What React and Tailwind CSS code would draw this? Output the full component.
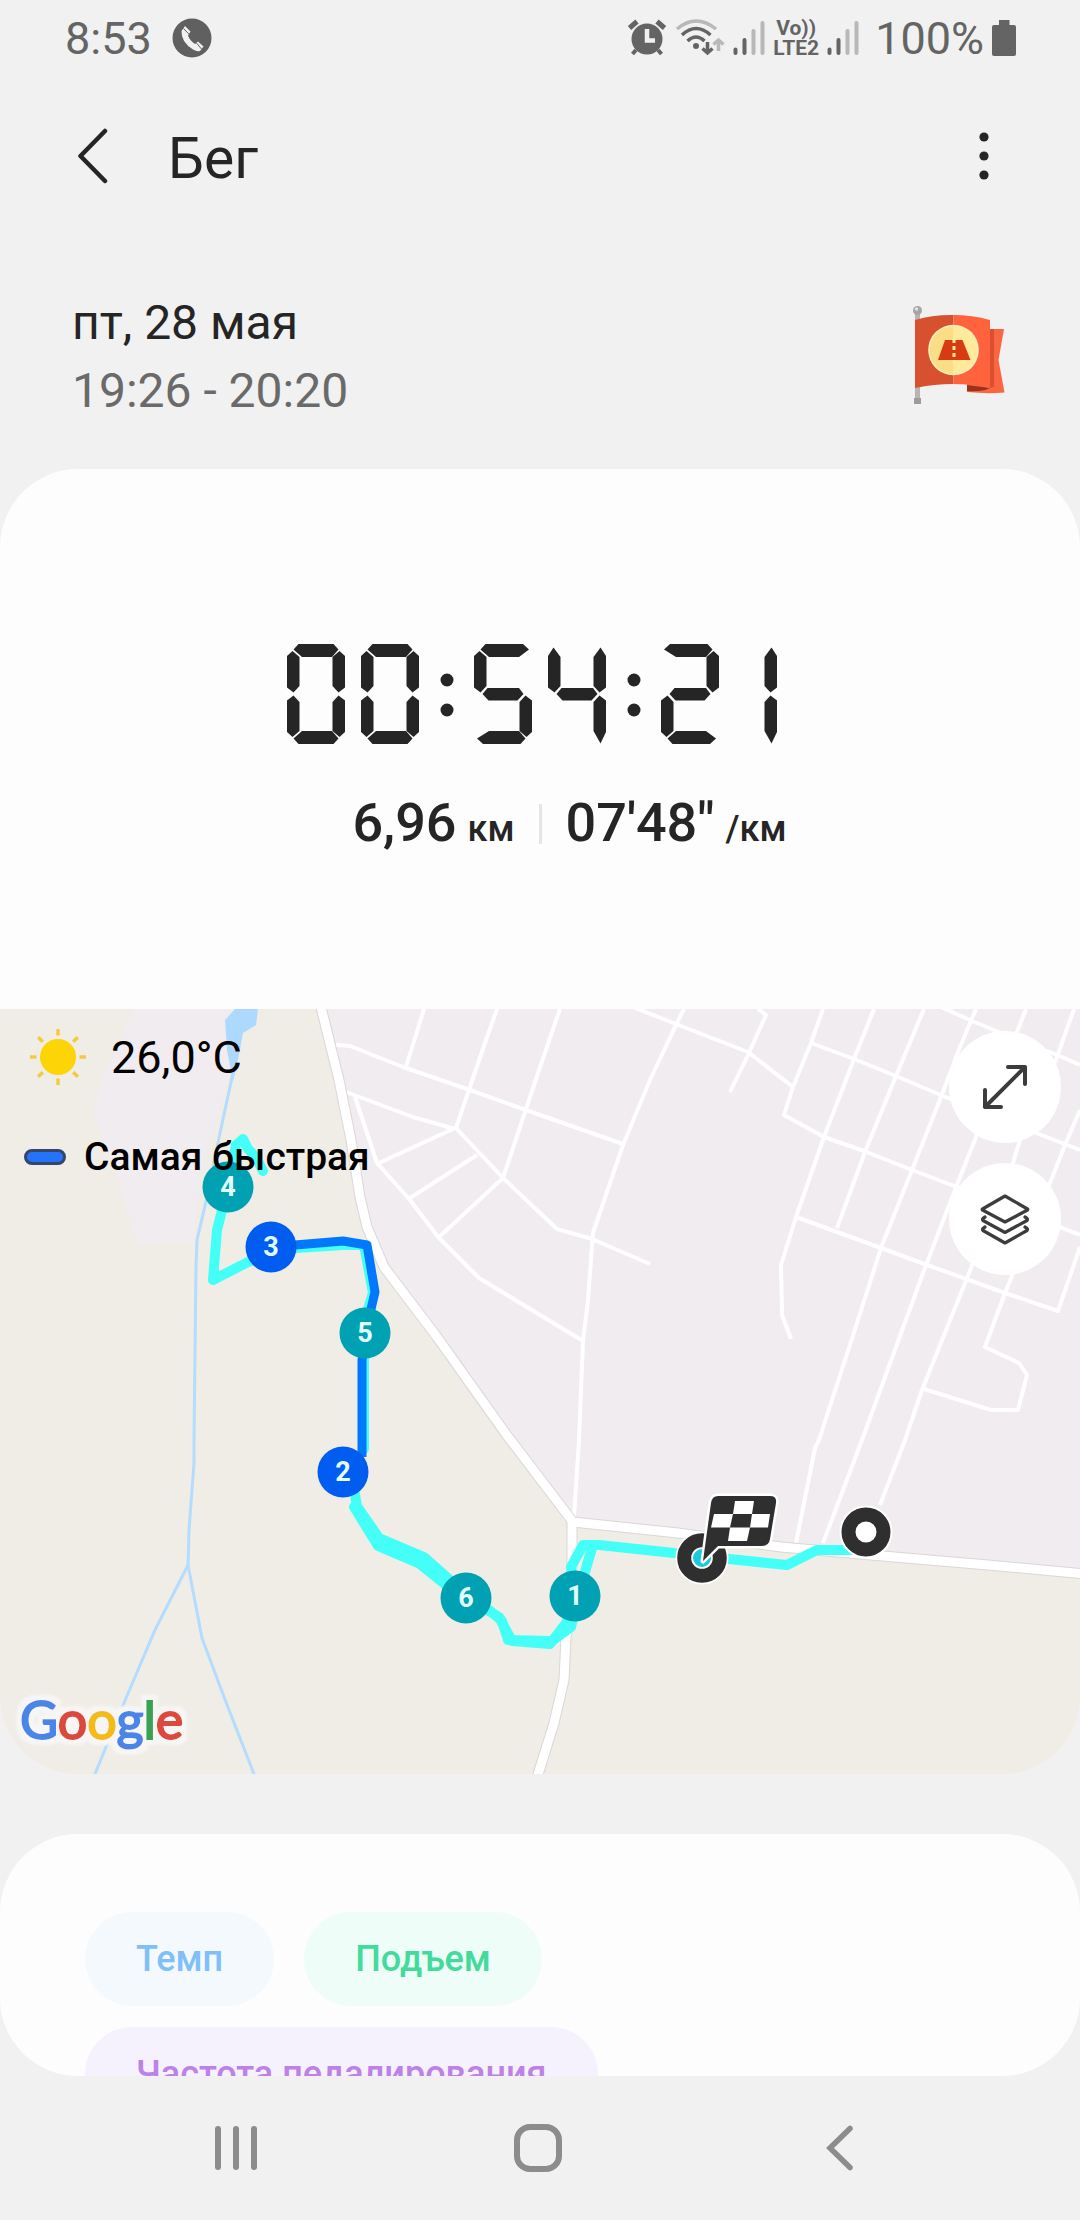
import React from "react";

const GRAY = "#646464";

/* ---------- status bar icons ---------- */

function CallIcon() {
  return (
    <svg className="size-10" viewBox="0 0 40 40" aria-hidden="true">
      <circle cx="20" cy="20" r="19.5" fill="#606060" />
      <path
        d="M9.500 13 L13 8 L18.500 13.500 L16 17.500 Q18 23 23 26 L26 23.500 L31.500 28.500 L28 33 Q25 34 21 31.500 Q9 24 9.500 13 Z"
        fill="#f1f1f1"
      />
      <path d="M11.500 10.500 L16.800 16 M24.500 25 L29.500 31" stroke="#606060" strokeWidth="1" />
    </svg>
  );
}

function AlarmIcon() {
  return (
    <svg className="h-10 w-10" viewBox="0 0 40 40" fill="none" stroke={GRAY} aria-hidden="true">
      <circle cx="20" cy="21" r="15.500" fill={GRAY} stroke="none" />
      <path d="M2.500 10 L10 3.500 M30 3.500 L37.500 10" strokeWidth="5" />
      <path d="M9 32 L5.500 36 M31 32 L34.500 36" strokeWidth="4" />
      <path d="M20 11 V22.500 H28" stroke="#f1f1f1" strokeWidth="4.500" />
    </svg>
  );
}

function WifiIcon() {
  return (
    <svg className="h-10 w-[50px]" viewBox="0 0 50 40" fill="none" aria-hidden="true">
      <path d="M2 11 Q21 -5 41 11" stroke="#b8b8b8" strokeWidth="3.500" />
      <path d="M7 17 Q21 4 35.500 17" stroke={GRAY} strokeWidth="3.500" />
      <path d="M12.500 23 Q21 15 29.500 23" stroke={GRAY} strokeWidth="3.500" />
      <circle cx="21" cy="28" r="3" fill={GRAY} />
      <path d="M32.500 24 V34 M27.500 30.500 L32.500 35 L37.500 30.500" stroke={GRAY} strokeWidth="3.500" />
      <path d="M43.500 33 V23 M38.500 26.500 L43.500 22 L48.500 26.500" stroke="#b8b8b8" strokeWidth="3.500" />
    </svg>
  );
}

function SignalIcon() {
  return (
    <svg className="h-10 w-8" viewBox="0 0 32 40" strokeLinecap="round" strokeWidth="4" aria-hidden="true">
      <path d="M2.500 31.500 V35 M11.500 22 V35" stroke={GRAY} />
      <path d="M20.500 13 V35 M29.500 5 V35" stroke="#b8b8b8" />
    </svg>
  );
}

function StatusBar() {
  return (
    <div className="flex h-[76px] shrink-0 items-center justify-between pl-[65px] pr-16 text-[45px] leading-none text-[#646464]">
      <div className="flex items-center gap-5">
        <span>8:53</span>
        <CallIcon />
      </div>
      <div className="flex items-center gap-2">
        <AlarmIcon />
        <WifiIcon />
        <SignalIcon />
        <div className="flex flex-col items-center text-[21px] font-bold leading-[20px]">
          <span>Vo))</span>
          <span>LTE2</span>
        </div>
        <SignalIcon />
        <span className="pl-2">100%</span>
        <svg className="h-9 w-6" viewBox="0 0 24 36" fill={GRAY} aria-hidden="true">
          <path d="M7 0 H17.500 V5 H22 Q24 5 24 7 V34 Q24 36 22 36 H2 Q0 36 0 34 V7 Q0 5 2 5 H7 Z" />
        </svg>
      </div>
    </div>
  );
}

function TitleBar() {
  return (
    <header className="flex h-40 shrink-0 items-center pl-[76px] pr-[74px]">
      <button type="button" aria-label="Назад" className="mr-[60px]">
        <svg className="h-14 w-8" viewBox="0 0 32 56" fill="none" stroke="#252525" strokeWidth="4.500" strokeLinecap="round" strokeLinejoin="round">
          <path d="M29 3 L4.500 28 L29 53" />
        </svg>
      </button>
      <h1 className="flex-1 pt-1 text-[57px] leading-none text-[#252525]">Бег</h1>
      <button type="button" aria-label="Ещё">
        <svg className="h-14 w-11" viewBox="0 0 44 56" fill="#252525">
          <circle cx="22" cy="9" r="4.600" />
          <circle cx="22" cy="28" r="4.600" />
          <circle cx="22" cy="47" r="4.600" />
        </svg>
      </button>
    </header>
  );
}

/* ---------- goal flag ---------- */

function FlagIcon() {
  return (
    <svg className="h-[100px] w-[94px]" viewBox="0 0 94 100" aria-label="Цель достигнута" role="img">
      <rect x="3" y="8" width="5" height="86" fill="#b5b5b5" />
      <rect x="2" y="93" width="7" height="6" fill="#9c9c9c" />
      <circle cx="5.500" cy="5.500" r="4.500" fill="#a5a5a5" />
      <circle cx="4.500" cy="4" r="1.800" fill="#e2e2e2" />
      <path d="M70 24 L92 24 L86.500 55 L92.500 87.500 Q75 89 55 87 L55 78 L78 80 Z" fill="#fb6640" />
      <path d="M78 24 H82 V82 L78 83 Z" fill="#d9502d" />
      <path d="M55 80 L78 83 Q70 87 55 86 Z" fill="#99331b" />
      <path d="M3 15 Q22 9.500 41.500 10 V79 Q22 79 3 83 Z" fill="#d8512e" />
      <path d="M41.500 10 Q60 10 78 15 V83 Q60 79 41.500 79 Z" fill="#ff633d" />
      <circle cx="41.500" cy="45" r="25.300" fill="#fdf0bd" />
      <path d="M41.500 21.200 A23.800 23.800 0 0 0 41.500 68.800 Z" fill="#f9de86" />
      <path d="M41.500 21.200 A23.800 23.800 0 0 1 41.500 68.800 Z" fill="#ffea9c" />
      <path d="M33 35 H50.500 L58.500 55 H26 Z" fill="#d83a12" />
      <path d="M42 34 V57" stroke="#ffea9c" strokeWidth="3" strokeDasharray="4 3" />
    </svg>
  );
}

/* ---------- seven-segment timer ---------- */

const SEGMENTS = {
  0: "abcdef",
  1: "bc",
  2: "abged",
  3: "abgcd",
  4: "fgbc",
  5: "afgcd",
  6: "afgedc",
  7: "abc",
  8: "abcdefg",
  9: "abcdfg",
};

function segmentPoints(name, on) {
  const has = (s) => on.includes(s);
  const topLeft = has("f") ? "6.5,5.5 11.5,0" : "3,5.5 9,0";
  const topRight = has("b") ? "46.5,0 51.5,5.5" : "49,0 55,5.5";
  const botLeft = has("e") ? "11.5,100 6.5,94.5" : "9,100 3,94.5";
  const botRight = has("c") ? "51.5,94.5 46.5,100" : "55,94.5 49,100";
  const peak = has("a") ? 7 : 3.5;
  const foot = has("d") ? 93 : 99.5;
  switch (name) {
    case "a":
      return `${topLeft} ${topRight} 45,13 15,13`;
    case "b":
      return `52.500,${peak} 58,12 58,43.500 51.500,48.500 45.500,42 45.500,13`;
    case "c":
      return `51.500,51.500 58,56.500 58,88 52.500,${foot} 45.500,87 45.500,58`;
    case "d":
      return `${botRight} ${botLeft} 15,87 45,87`;
    case "e":
      return `6.500,51.500 12.500,58 12.500,87 5.500,${foot} 0,88 0,56.500`;
    case "f":
      return `5.500,${peak} 12.500,13 12.500,42 6.500,48.500 0,43.500 0,12`;
    default:
      return "8.5,50 13.5,44 45,44 49.5,50 43.5,56.5 14.5,56.5";
  }
}

function Timer({ value }) {
  return (
    <div role="timer" aria-label={value} className="flex items-center justify-center gap-4">
      {value.split("").map((ch, i) =>
        ch === ":" ? (
          <svg key={i} className="-mx-4 h-[100px] w-[55px]" viewBox="0 0 55 100" fill="#252525">
            <circle cx="28" cy="36" r="6.500" />
            <circle cx="28" cy="66" r="6.500" />
          </svg>
        ) : (
          <svg key={i} className="h-[100px] w-[58px]" viewBox={ch === "1" ? "16 0 58 100" : "0 0 58 100"} fill="#252525">
            {SEGMENTS[ch].split("").map((s) => (
              <polygon key={s} points={segmentPoints(s, SEGMENTS[ch])} />
            ))}
          </svg>
        )
      )}
    </div>
  );
}

function Summary() {
  return (
    <section className="flex flex-col rounded-t-[78px] bg-[#fdfdfd] pb-[150px] pt-[175px] text-[#252525]">
      <Timer value="00:54:21" />
      <div className="mt-[49px] flex items-center text-[54px] font-medium leading-[60px]">
        <p className="flex flex-1 items-baseline justify-end gap-[11px] pr-6">
          6,96 <span className="text-[36px]">км</span>
        </p>
        <span className="mb-1 h-10 w-[3px] bg-[#e5e5e5]" />
        <p className="flex flex-1 items-baseline gap-[11px] pl-6">
          07'48" <span className="text-[36px]">/км</span>
        </p>
      </div>
    </section>
  );
}

/* ---------- map ---------- */

const STREETS = [
  "336,36 350,37 403,58 467,80 540,106 623,135",
  "424,0 406,58",
  "497,0 486,31 456,119 503,169 540,204 557,220 592,230 650,255",
  "346,83 413,108 455,120",
  "355,88 377,154 410,191 439,229 479,269 540,306 583,332",
  "379,154 455,119",
  "410,189 477,146",
  "439,228 503,169 525,103 540,58 560,0",
  "633,-2 676,15 748,43 793,78",
  "684,0 676,16 650,71 623,136 593,224 588,291 583,332 579,431 574,508",
  "758,0 766,6 748,46 730,83",
  "823,0 811,34 793,78 784,106 824,128 864,142 912,161 957,178 1080,226",
  "811,34 854,50 896,67 943,87 1036,124 1080,141",
  "874,0 854,50 824,128 796,208 781,256 782,306 791,330",
  "924,0 896,67 865,143 837,219",
  "976,0 960,38 941,88 912,161 881,239 857,314 819,431 815,439 796,534",
  "1026,0 976,128 955,181 926,256 862,431 823,534",
  "1074,0 1057,48 1020,131 1013,154 967,269 922,381 905,431 880,496",
  "1080,101 1065,136 1050,174 1005,284 985,338 1019,354 1027,366 1018,401 991,401 924,380",
  "796,208 881,239 927,256 1005,284 1058,302 1080,238",
  "941,-2 972,12 1001,24 1057,46 1080,56",
];

const ROADS = [
  "320,-6 339,71 351,131 360,188 367,218 384,258 437,328 506,425 573,513",
  "573,513 678,524 781,538 871,546 988,556 1086,565",
  "572,513 572,554 571,608 566,628 564,671 554,714 536,772",
];

const MARKERS = [
  { n: 4, x: 228, y: 178, fill: "#00a1b2" },
  { n: 3, x: 271, y: 238, fill: "#005df0" },
  { n: 5, x: 365, y: 324, fill: "#00a1b2" },
  { n: 2, x: 343, y: 463, fill: "#005df0" },
  { n: 6, x: 466, y: 589, fill: "#00a1b2" },
  { n: 1, x: 575, y: 587, fill: "#00a1b2" },
];

function MapDrawing() {
  return (
    <svg className="block h-auto w-full" viewBox="0 0 1080 765" fill="none" role="img" aria-label="Маршрут на карте">
      <rect width="1080" height="765" fill="#efede6" />
      <polygon fill="#f0ecf0" points="133,0 103,68 93,101 119,174 136,236 193,233 203,151 220,101 232,58 226,21 241,0" />
      <polygon fill="#f0ecf0" points="320,0 339,71 351,131 360,188 367,218 384,258 437,328 506,425 573,513 678,524 781,538 871,546 988,556 1080,564 1080,0" />
      <polygon fill="#add9ff" points="235,0 225,11 227,41 233,72 238,51 243,24 256,16 258,0" />
      <g stroke="#b3dcff" strokeWidth="3">
        <polyline points="233,64 220,124 208,184 197,231 196,258 194,431 194,454 189,521 188,556 155,621 121,701 95,765" />
        <polyline points="188,556 202,629 224,688 254,765" />
      </g>
      <g stroke="#ffffff" strokeWidth="4" strokeLinejoin="round">
        {STREETS.map((p) => (
          <polyline key={p} points={p} />
        ))}
      </g>
      <g stroke="#d9d7d8" strokeWidth="11" strokeLinejoin="round">
        {ROADS.map((p) => (
          <polyline key={p} points={p} />
        ))}
      </g>
      <g stroke="#ffffff" strokeWidth="9" strokeLinejoin="round">
        {ROADS.map((p) => (
          <polyline key={p} points={p} />
        ))}
      </g>

      <g stroke="#44fff8" strokeWidth="10" strokeLinejoin="round" strokeLinecap="round">
        <polyline points="860,541 817,541 787,556 729,550 674,544 599,536 583,536 571,558 575,587 566,614 550,635 512,632 499,608 467,589" />
        <polyline points="593,536 584,566 571,618 552,632 508,631 502,612 489,601" />
        <polyline points="460,580 424,548 379,529 357,497 353,475" />
        <polyline points="456,584 420,555 378,537 354,498" />
        <polyline points="364,440 364,351 368,300 373,284 364,236 343,236 296,239 248,253 213,271 217,221 228,178 236,136 243,130 248,140 256,148 263,162" />
      </g>
      <polyline stroke="#0078fc" strokeWidth="9" strokeLinejoin="round" points="362,448 362,351 371,300 375,283 367,236 343,232 271,238" />

      {MARKERS.map((m) => (
        <g key={m.n}>
          <circle cx={m.x} cy={m.y} r="25.500" fill={m.fill} />
          <text x={m.x} y={m.y + 9} textAnchor="middle" fill="#e2ffff" className="text-[27px] font-bold">
            {m.n}
          </text>
        </g>
      ))}

      <circle cx="702" cy="549" r="17.500" stroke="#ffffff" strokeWidth="18" />
      <circle cx="702" cy="549" r="10" fill="#19c9df" stroke="#ffffff" strokeWidth="2" />
      <circle cx="702" cy="549" r="17.800" stroke="#2f2f2f" strokeWidth="14" />
      <path
        d="M718 487 H770 Q777 487 776 494 L770 530 Q769 537 762 537 H718 L703 552 L711 494 Q712 487 718 487 Z"
        stroke="#ffffff"
        strokeWidth="5"
        strokeLinejoin="round"
      />
      <path
        d="M718 487 H770 Q777 487 776 494 L770 530 Q769 537 762 537 H718 L703 552 L711 494 Q712 487 718 487 Z"
        fill="#2f2f2f"
      />
      <path
        d="M735 492 H754 L752 505 H733 Z M714 505 H733 L730 518.500 H711 Z M752 505 H770 L768 518.500 H750 Z M730 518.500 H750 L747 532 H728 Z"
        fill="#ffffff"
      />

      <circle cx="866" cy="523" r="26.500" fill="#ffffff" />
      <circle cx="866" cy="523" r="17.500" stroke="#2f2f2f" strokeWidth="14" />
    </svg>
  );
}

function GoogleMark() {
  return (
    <svg className="h-[80px] w-[184px]" viewBox="0 0 184 80" role="img" aria-label="Google">
      <defs>
        <filter id="halo" x="-10%" y="-30%" width="120%" height="160%">
          <feMorphology in="SourceAlpha" operator="dilate" radius="5" result="spread" />
          <feGaussianBlur in="spread" stdDeviation="1" result="soft" />
          <feFlood floodColor="#f7f6f5" />
          <feComposite in2="soft" operator="in" result="glow" />
          <feMerge>
            <feMergeNode in="glow" />
            <feMergeNode in="SourceGraphic" />
          </feMerge>
        </filter>
      </defs>
      <text x="10" y="60" className="font-[Lato] text-[52px]" strokeWidth="2" filter="url(#halo)">
        <tspan fill="#4a86e8" stroke="#4a86e8">G</tspan>
        <tspan fill="#dc483c" stroke="#dc483c">o</tspan>
        <tspan fill="#f4bb16" stroke="#f4bb16">o</tspan>
        <tspan fill="#4a86e8" stroke="#4a86e8">g</tspan>
        <tspan fill="#38a352" stroke="#38a352">l</tspan>
        <tspan fill="#dc483c" stroke="#dc483c">e</tspan>
      </text>
    </svg>
  );
}

function SunIcon() {
  return (
    <svg className="size-[58px]" viewBox="-29 -29 58 58" aria-hidden="true">
      <circle r="18" fill="#fdd406" />
      <g stroke="#f3cb3c" strokeWidth="3.500">
        {[0, 45, 90, 135, 180, 225, 270, 315].map((a) => (
          <path key={a} d="M0 -21.500 V-28" transform={`rotate(${a})`} />
        ))}
      </g>
    </svg>
  );
}

const roundButton = "flex size-28 items-center justify-center rounded-full bg-white";

function RouteMap() {
  return (
    <section className="relative overflow-hidden rounded-b-[78px]">
      <MapDrawing />
      <div className="absolute left-[24px] top-[19px] flex flex-col text-black">
        <div className="flex h-[58px] items-center gap-6 pl-[5px] text-[45px] leading-none">
          <SunIcon />
          <span>26,0°C</span>
        </div>
        <div className="mt-[46px] flex items-center gap-[18px] text-[39px] font-medium leading-[50px]">
          <span className="h-4 w-[42px] rounded-full border-[3px] border-[#34466b] bg-[#2474fb]" />
          <span>Самая быстрая</span>
        </div>
      </div>
      <div className="absolute right-[19px] top-[22px] flex flex-col gap-5">
        <button type="button" aria-label="Развернуть карту" className={roundButton}>
          <svg className="size-12" viewBox="0 0 48 48" fill="none" stroke="#3c3c3c" strokeWidth="4" strokeLinecap="round" strokeLinejoin="round">
            <path d="M27 4 H44 V21 M44 4 L4 44 M4 27 V44 H20" />
          </svg>
        </button>
        <button type="button" aria-label="Слои карты" className={roundButton}>
          <svg className="size-[52px]" viewBox="0 0 52 52" fill="none" stroke="#3c3c3c" strokeWidth="3.200" strokeLinecap="round" strokeLinejoin="round">
            <path d="M26 3 L48.500 16 Q49 16.500 48.500 17 L26 29 L3.500 17 Q3 16.500 3.500 16 Z" />
            <path d="M6 24 Q2.500 26 4 27.500 L26 39.500 L48 27.500 Q49.500 26 46 24" />
            <path d="M6 34 Q2.500 36 4 37.500 L26 50 L48 37.500 Q49.500 36 46 34" />
          </svg>
        </button>
      </div>
      <div className="absolute bottom-[15px] left-[10px]">
        <GoogleMark />
      </div>
    </section>
  );
}

/* ---------- chart chips ---------- */

const chip = "rounded-full px-[51px] text-[36px] font-medium leading-[94px]";

function ChartCard() {
  return (
    <section className="mt-[60px] flex flex-wrap gap-x-[30px] gap-y-[21px] rounded-[78px] bg-[#fdfdfd] px-[85px] pb-20 pt-[78px]">
      <button type="button" className={`${chip} bg-[#f4f9fd] text-[#7fc0f8]`}>Темп</button>
      <button type="button" className={`${chip} bg-[#effdf8] text-[#42db9c]`}>Подъем</button>
      <button type="button" className={`${chip} bg-[#f5f1fd] text-[#bd82e6]`}>Частота педалирования</button>
    </section>
  );
}

function NavBar() {
  return (
    <nav className="flex h-36 shrink-0 items-center justify-center gap-[250px] pr-1">
      <button type="button" aria-label="Недавние">
        <svg className="size-[52px]" viewBox="0 0 52 52" stroke="#8c8c8c" strokeWidth="6" strokeLinecap="round">
          <path d="M8 7 V45 M26 7 V45 M44 7 V45" />
        </svg>
      </button>
      <button type="button" aria-label="Домой">
        <svg className="size-[52px]" viewBox="0 0 52 52" fill="none" stroke="#8c8c8c" strokeWidth="6">
          <rect x="5" y="5" width="42" height="42" rx="13" />
        </svg>
      </button>
      <button type="button" aria-label="Назад">
        <svg className="size-[52px]" viewBox="0 0 52 52" fill="none" stroke="#8c8c8c" strokeWidth="5.500" strokeLinecap="round">
          <path d="M36 6.500 L16 26 L36 45.500" />
        </svg>
      </button>
    </nav>
  );
}

export default function App() {
  return (
    <div className="flex h-screen flex-col bg-[#f1f1f1] font-[Roboto,sans-serif]">
      <StatusBar />
      <TitleBar />
      <main className="min-h-0 flex-1 overflow-hidden rounded-b-[78px]">
        <div className="flex items-start justify-between pb-11 pl-[72px] pr-[74px] pt-[53px]">
          <div className="text-[48px] leading-[68px]">
            <p className="text-[#252525]">пт, 28 мая</p>
            <p className="text-[#6a6a6a]">19:26 - 20:20</p>
          </div>
          <div className="pt-4">
            <FlagIcon />
          </div>
        </div>
        <Summary />
        <RouteMap />
        <ChartCard />
      </main>
      <NavBar />
    </div>
  );
}
